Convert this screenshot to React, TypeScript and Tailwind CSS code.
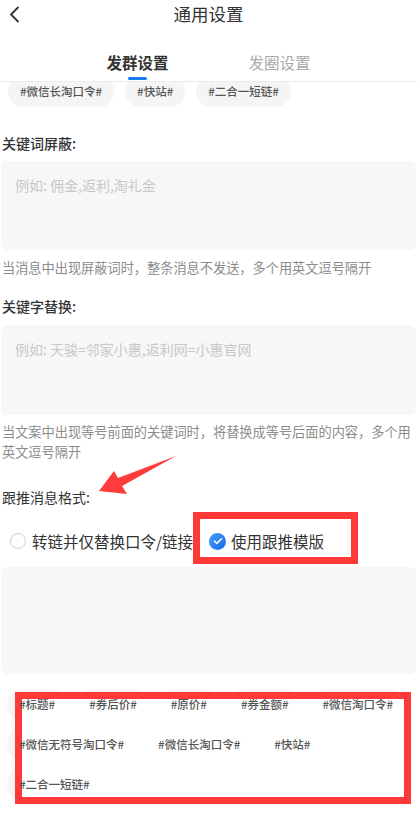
import React from "react";

const FONT = { fontFamily: '"Noto Sans CJK SC", "Noto Sans", sans-serif' };

function Tag({ label, overlay = false }: { label: string; overlay?: boolean }) {
  return (
    <div className="h-[31px] px-3 rounded-full bg-[#f5f5f5] flex items-center text-[11.5px] text-[#555] font-medium">
      <span className={overlay ? "relative z-20" : ""}>{label}</span>
    </div>
  );
}

export default function App() {
  const bottomTags = [
    "#标题#",
    "#券后价#",
    "#原价#",
    "#券金额#",
    "#微信淘口令#",
    "#微信无符号淘口令#",
    "#微信长淘口令#",
    "#快站#",
    "#二合一短链#",
  ];
  return (
    <div className="relative w-[417px] h-[815px] bg-white overflow-hidden" style={FONT}>
      {/* Header */}
      <div className="relative z-10 bg-white">
        <div className="relative h-[28px] flex items-center justify-center">
          <svg className="absolute left-[9px] top-[6px]" width="11" height="17" viewBox="0 0 11 17">
            <path d="M9 1.5 L2 8.5 L9 15.5" fill="none" stroke="#333" strokeWidth="1.8" strokeLinecap="round" strokeLinejoin="round" />
          </svg>
          <span className="text-[17.5px] text-[#333]">通用设置</span>
        </div>
        <div className="flex justify-center pb-px">
          <div className="w-[142px] flex flex-col items-center pt-[24px]">
            <span className="h-[20px] leading-[20px] text-[15.5px] font-bold text-[#333]">发群设置</span>
            <div className="mt-[5px] w-[19px] h-[3px] rounded-full bg-[#1a7cf5]" />
          </div>
          <div className="w-[142px] flex flex-col items-center pt-[24px]">
            <span className="h-[20px] leading-[20px] text-[15.5px] text-[#aaa]">发圈设置</span>
          </div>
        </div>
        <div className="h-px bg-[#ebebeb]" />
      </div>

      {/* Top tags row (scrolled) */}
      <div className="-mt-[6px] flex gap-[11px] pl-[8px]">
        <Tag label="#微信长淘口令#" />
        <Tag label="#快站#" />
        <Tag label="#二合一短链#" />
      </div>

      <div className="px-px">
        <div className="mt-[26px] h-[20px] leading-[20px] text-[14px] font-medium text-[#333] pl-px">关键词屏蔽:</div>
        <div className="mt-[8px] h-[89px] rounded-[6px] bg-[#f7f7f7] px-[14px] pt-[14px]">
          <div className="text-[14px] leading-[20px] text-[#c8c8c8]">例如: 佣金,返利,淘礼金</div>
        </div>
        <div className="mt-[8px] text-[13.2px] leading-[20px] text-[#8c8c8c] pl-px">
          当消息中出现屏蔽词时，整条消息不发送，多个用英文逗号隔开
        </div>

        <div className="mt-[18px] h-[20px] leading-[20px] text-[14px] font-medium text-[#333] pl-px">关键字替换:</div>
        <div className="mt-[9px] h-[90px] rounded-[6px] bg-[#f7f7f7] px-[14px] pt-[14px]">
          <div className="text-[14px] leading-[20px] text-[#c8c8c8]">例如: 天骏=邻家小惠,返利网=小惠官网</div>
        </div>
        <div className="mt-[7px] text-[13.2px] leading-[20px] text-[#8c8c8c] pl-px">
          当文案中出现等号前面的关键词时，将替换成等号后面的内容，多个用英文逗号隔开
        </div>

        <div className="mt-[25px] h-[20px] leading-[20px] text-[14px] text-[#333] pl-px">跟推消息格式:</div>

        <div className="relative mt-[23px] h-[22px] flex items-center pl-[9px]">
          <div className="w-[16px] h-[16px] rounded-full border border-[#cfcfcf] bg-white" />
          <span className="ml-[6px] text-[15.5px] leading-[22px] text-[#333]">转链并仅替换口令/链接</span>
          <div className="ml-[16px] w-[17px] h-[17px] rounded-full bg-gradient-to-br from-[#4aa0ff] to-[#1366e0] flex items-center justify-center">
            <svg width="10" height="8" viewBox="0 0 10 8">
              <path d="M1.5 4.2 L4 6.3 L8.6 1.8" fill="none" stroke="white" strokeWidth="1.6" strokeLinecap="round" strokeLinejoin="round" />
            </svg>
          </div>
          <span className="ml-[5px] text-[15.5px] leading-[22px] text-[#333]">使用跟推模版</span>
          <div className="absolute left-[192px] -top-[18px] w-[165px] h-[52px] border-[7px] border-[#ff3838]" />
        </div>

        <div className="mt-[15px] h-[107px] rounded-[6px] bg-[#f7f7f7]" />
      </div>

      {/* Bottom tags with annotation box */}
      <div className="relative mt-[15px] pl-[7px] pr-[4px] flex flex-wrap gap-x-[10px] gap-y-[9px]">
        {bottomTags.map((t) => (
          <Tag key={t} label={t} overlay />
        ))}
        <div className="absolute left-[15px] top-[3px] w-[396px] h-[112px] border-[7px] border-[#ff3838] bg-white z-10" />
      </div>

      {/* Red arrow annotation */}
      <svg className="absolute left-0 top-0 pointer-events-none" width="417" height="815" viewBox="0 0 417 815">
        <polygon points="99,491 114,471 118,478 176,456 122,486 127,494" fill="#ff3b3b" />
      </svg>
    </div>
  );
}
